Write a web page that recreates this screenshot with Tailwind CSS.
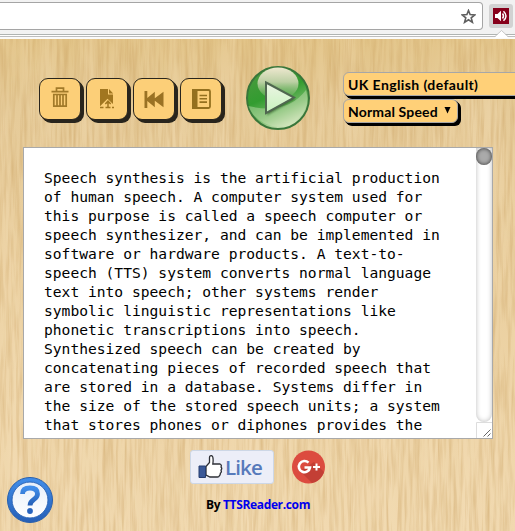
<!DOCTYPE html>
<html lang="en">
<head>
<meta charset="utf-8">
<title>TTSReader</title>
<script src="https://cdn.jsdelivr.net/npm/@tailwindcss/browser@4"></script>
</head>
<body class="relative flex h-[531px] w-[515px] flex-col overflow-hidden bg-[#e9cc98]">
<!-- browser toolbar -->
<header class="relative h-[39px] shrink-0 bg-[#f2f2f2]">
  <div class="flex h-[34px] items-start gap-[6px] pt-[2px]">
    <div class="flex h-[28px] w-[483px] items-center justify-end rounded-r-[4px] border border-l-0 border-[#a5a5a5] bg-white pr-[6px]">
      <svg class="h-[15px] w-[15px]" viewBox="0 0 15 15" fill="none" stroke="#5f5f5f" stroke-width="1.6"><path d="M7.5 1.5 9.1 5.6 13.8 5.9 10.2 8.8 11.4 13.3 7.5 10.8 3.6 13.3 4.8 8.8 1.2 5.9 5.9 5.6Z"/></svg>
    </div>
    <div class="mt-[2px] flex h-[24px] w-[24px] items-center justify-center rounded-[3px] bg-[#d2d2d2]">
      <svg class="h-[16px] w-[16px]" viewBox="0 0 16 16"><path fill="#86001b" d="M0 0h16v16H0z"/><path fill="#fff" d="M2 6h2.5L8 2.8v10.4L4.5 10H2z"/><path d="M9.5 5.5q2 2.5 0 5M10.5 3.2q5 4.8 0 9.6" fill="none" stroke="#fff" stroke-width="1.5"/></svg>
    </div>
  </div>
  <div class="h-px bg-[#b0b4b2]"></div>
  <div class="h-px bg-white"></div>
  <div class="h-px bg-[#bebebe]"></div>
  <div class="h-[2px] bg-[#fafafa]"></div>
  <svg class="absolute top-[30px] left-[495px] h-[8px] w-[13px]" viewBox="0 0 13 8"><path d="M0 7 6.5 .5 13 7v1H0z" fill="#fff"/><path d="M0 6.5 6.5 .5 13 6.5" fill="none" stroke="#bbb" stroke-width=".8"/></svg>
</header>

<main class="relative flex grow flex-col">
  <!-- wood grain -->
  <svg class="absolute inset-0 h-[492px] w-[515px]" viewBox="0 0 515 492">
    <defs>
      <linearGradient id="wood" x1="0" y1="0" x2="0" y2="1"><stop offset="0" stop-color="#e2c488"/><stop offset=".15" stop-color="#e6cb99"/><stop offset=".5" stop-color="#ebd0a0"/><stop offset="1" stop-color="#f0d8ae"/></linearGradient>
      <filter id="grain" x="0" y="0" width="100%" height="100%" color-interpolation-filters="sRGB"><feTurbulence type="fractalNoise" baseFrequency=".3 .018" numOctaves="3" seed="8"/><feColorMatrix values="0 0 0 0 .77  0 0 0 0 .6  0 0 0 0 .34  .8 0 0 0 -.31"/></filter>
      <filter id="light" x="0" y="0" width="100%" height="100%" color-interpolation-filters="sRGB"><feTurbulence type="fractalNoise" baseFrequency=".05 .004" numOctaves="2" seed="3"/><feColorMatrix values="0 0 0 0 .97  0 0 0 0 .89  0 0 0 0 .75  .7 0 0 0 -.27"/></filter>
    </defs>
    <path fill="url(#wood)" d="M0 0h515v492H0z"/>
    <path filter="url(#light)" d="M0 0h515v492H0z"/>
    <path filter="url(#grain)" d="M0 0h515v492H0z"/>
  </svg>

  <div class="relative flex h-[108px] shrink-0 items-start pl-[39px]">
    <div class="mt-[39px] flex gap-[5px]">
      <button class="flex h-[42px] w-[42px] items-center justify-center rounded-[9px] border border-[#29251d] bg-[#fccf78] shadow-[1px_1px_0_#29251d,2px_2px_0_#29251d,3px_3px_0_#29251d]">
        <svg class="-mt-[3px] h-[21px] w-[18px]" viewBox="0 0 18 21" fill="none" stroke="#a17a29" stroke-width="1.7"><path d="M.5 4.7h17M5.5 4V1.2h7V4M2.8 7.5h12.4v11.7H2.8zM6 8v11M9 8v11M12 8v11"/></svg>
      </button>
      <button class="flex h-[42px] w-[42px] items-center justify-center rounded-[9px] border border-[#29251d] bg-[#fccf78] shadow-[1px_1px_0_#29251d,2px_2px_0_#29251d,3px_3px_0_#29251d]">
        <svg class="-mt-px h-[20px] w-[16px]" viewBox="0 0 16 20"><path fill="#a17620" d="M1 0h8v5.500h5V15L8.500 9.800 1 17.200zM10 0l4.200 4.500H10z"/><path d="M9 18v-5M6.300 15 9 12.200l2.700 2.800M1 18.500h3.500M6.500 18.500h5M13 18.500h2" fill="none" stroke="#a17620" stroke-width="1.500"/></svg>
      </button>
      <button class="flex h-[42px] w-[42px] items-center justify-center rounded-[9px] border border-[#29251d] bg-[#fccf78] shadow-[1px_1px_0_#29251d,2px_2px_0_#29251d,3px_3px_0_#29251d]">
        <svg class="h-[17px] w-[20px]" viewBox="0 0 20 17" fill="#9a7224"><path d="M.5 0h2.800v7L10.800.8v6.500L19.500.8v15.400l-8.700-6.500v6.500L3.300 10v7H.5z"/></svg>
      </button>
      <button class="flex h-[42px] w-[42px] items-center justify-center rounded-[9px] border border-[#29251d] bg-[#fccf78] shadow-[1px_1px_0_#29251d,2px_2px_0_#29251d,3px_3px_0_#29251d]">
        <svg class="h-[20px] w-[19px]" viewBox="0 0 19 20"><path d="M1 1h15.500q1.500 0 1.500 1.500v15q0 1.500-1.500 1.500H1z" fill="none" stroke="#94701e" stroke-width="1.800"/><path fill="#94701e" d="M0 0h5.500v20H0z"/><path d="M7.500 6.500H15M7.500 9.800H15M7.500 13.100H15" stroke="#94701e" stroke-width="1.600"/></svg>
      </button>
    </div>

    <svg class="mt-[26px] ml-[23px] h-[66px] w-[66px] shrink-0" viewBox="0 0 66 66">
      <defs>
        <linearGradient id="orb" x1=".2" y1="0" x2=".65" y2="1"><stop offset="0" stop-color="#4c9a3f"/><stop offset=".45" stop-color="#329c30"/><stop offset=".7" stop-color="#6db760"/><stop offset="1" stop-color="#dfebc8"/></linearGradient>
        <linearGradient id="shine" x1="0" y1="0" x2="0" y2="1"><stop offset="0" stop-color="#eee8cf"/><stop offset=".45" stop-color="#bcd0a4"/><stop offset="1" stop-color="#5bab50" stop-opacity=".5"/></linearGradient>
        <linearGradient id="tri" x1="0" y1="0" x2="0" y2="1"><stop offset="0" stop-color="#edf5e5"/><stop offset="1" stop-color="#c7f3bd"/></linearGradient>
        <filter id="soft"><feGaussianBlur stdDeviation="1.3"/></filter>
      </defs>
      <circle cx="33" cy="33" r="31" fill="url(#orb)" stroke="#39763a" stroke-width="2"/>
      <path d="M3.500 41Q42 50 61 25Q67 46 46 58.500Q33 65 19 58Q7 52 3.500 41" fill="#d5e7c1" opacity=".4"/>
      <ellipse cx="33" cy="18.500" rx="20.500" ry="16" fill="url(#shine)"/>
      <path d="M22 18v32l28-16z" fill="#21491f" opacity=".7" filter="url(#soft)"/>
      <path d="M21 17.500v30.500l28-15.500z" fill="url(#tri)" stroke="#506750" stroke-width="2"/>
    </svg>

    <div class="mt-[33px] ml-[32px] flex w-[172px] shrink-0 flex-col items-start gap-[3px] font-['Lato',sans-serif] text-[14px] font-bold text-black">
      <div class="flex h-[24px] w-[190px] shrink-0 items-center rounded-[6px] border border-[#a7a7a7] bg-[#ffd078] pl-[4px] shadow-[1px_1px_0_#000,2px_2px_0_#000,3px_3px_0_#000]"><span class="whitespace-nowrap tracking-[.4px]">UK English (default)</span></div>
      <div class="flex h-[24px] w-[115px] items-center rounded-[6px] border border-[#a7a7a7] bg-[#ffd078] pl-[4px] shadow-[1px_1px_0_#000,2px_2px_0_#000,3px_3px_0_#000]"><span class="w-[96px] whitespace-nowrap tracking-[.15px]">Normal Speed</span>
        <svg class="-mt-[2px] h-[7px] w-[7px]" viewBox="0 0 7 7"><path d="M.5 0h6L3.500 6.500z"/></svg></div>
    </div>
  </div>

  <div class="relative ml-[23px] flex h-[292px] w-[470px] shrink-0 border border-[#a9a9a9] bg-white">
    <div class="w-[452px] pt-[20px] pl-[20px] font-['DejaVu_Sans_Mono',monospace] text-[14.62px] leading-[19px] whitespace-pre text-black">Speech synthesis is the artificial production
of human speech. A computer system used for
this purpose is called a speech computer or
speech synthesizer, and can be implemented in
software or hardware products. A text-to-
speech (TTS) system converts normal language
text into speech; other systems render
symbolic linguistic representations like
phonetic transcriptions into speech.
Synthesized speech can be created by
concatenating pieces of recorded speech that
are stored in a database. Systems differ in
the size of the stored speech units; a system
that stores phones or diphones provides the</div>
    <div class="flex w-[16px] flex-col">
      <div class="h-[274px] rounded-b-[8px] bg-white shadow-[inset_0_0_5px_#bbb]">
        <div class="h-[17px] w-[16px] rounded-full bg-[#aaa] shadow-[inset_0_0_4px_#333]"></div>
      </div>
      <svg class="h-[16px] w-[16px]" viewBox="0 0 16 16" fill="none"><path d="M.5 16V.5H16" stroke="#ddd"/><path d="m7.500 14.500 7-7M11.500 14.500l3-3" stroke="#666"/></svg>
    </div>
  </div>

  <div class="relative mt-[11px] flex h-[34px] pl-[190px]">
    <div class="flex h-[34px] w-[84px] items-center rounded-[3px] border border-[#cdd7e6] bg-[#eceef8] pl-[7px]">
      <svg class="-mt-px h-[25px] w-[25px]" viewBox="0 0 25 25"><path d="M8 12.500 11.500 8.500V3.500q.2-2.200 2-1.800 2.400.6 1.300 8.300H22q2 1 1 3 1.500 1.500 0 3.200 1 1.800-.7 3 .3 1.700-1 2.600-.3 1.200-1.800 1.200H12L8 21z" fill="#fff" stroke="#2d2f36" stroke-width="1.300"/><path d="M1 12h6.500v11.500H1z" fill="#3b5998" stroke="#263e70"/></svg>
      <span class="ml-[2px] font-['Open_Sans',sans-serif] text-[20.5px] font-semibold tracking-[-.9px] text-[#577abb]">Like</span>
    </div>
    <svg class="ml-[18px] h-[34px] w-[34px]" viewBox="0 0 34 34"><circle cx="16.500" cy="17" r="16.500" fill="#dc4b3f"/><path d="m22 12 10 10q-3 9-12 11L8 21z" fill="#b83b32" opacity=".7"/><path d="M16.500 12.700A5.600 5.600 0 1 0 18 17.500H12.500" fill="none" stroke="#fff" stroke-width="2.600"/><path d="M24.500 13.500v7M21 17h7" stroke="#fff" stroke-width="2"/></svg>
  </div>
  <div class="relative mt-[12px] pl-[206px] font-['Open_Sans',sans-serif] text-[12px] leading-[18px] font-bold tracking-[-.35px] whitespace-nowrap text-black">By <a class="text-[#0000ee]">TTSReader.com</a></div>

  <!-- floating help button -->
  <svg class="absolute top-[438px] left-[7px] h-[46px] w-[46px]" viewBox="0 0 46 46">
    <defs><linearGradient id="ring" x1="0" y1="0" x2="0" y2="1"><stop offset="0" stop-color="#418eea"/><stop offset="1" stop-color="#265fb6"/></linearGradient><linearGradient id="face" x1="0" y1="0" x2="0" y2="1"><stop offset="0" stop-color="#e7effa"/><stop offset="1" stop-color="#fff"/></linearGradient></defs>
    <circle cx="23" cy="23" r="22.500" fill="url(#ring)" stroke="#285fac"/><circle cx="23" cy="23" r="18" fill="url(#face)" stroke="#2c66b8"/>
    <path d="M15.500 17q0-6 7.500-6t7.500 6q0 3-3.700 5.500T23 28.500" fill="none" stroke="url(#ring)" stroke-width="4.800"/><circle cx="23" cy="34" r="2.900" fill="#2763bd"/>
  </svg>
</main>
</body>
</html>
